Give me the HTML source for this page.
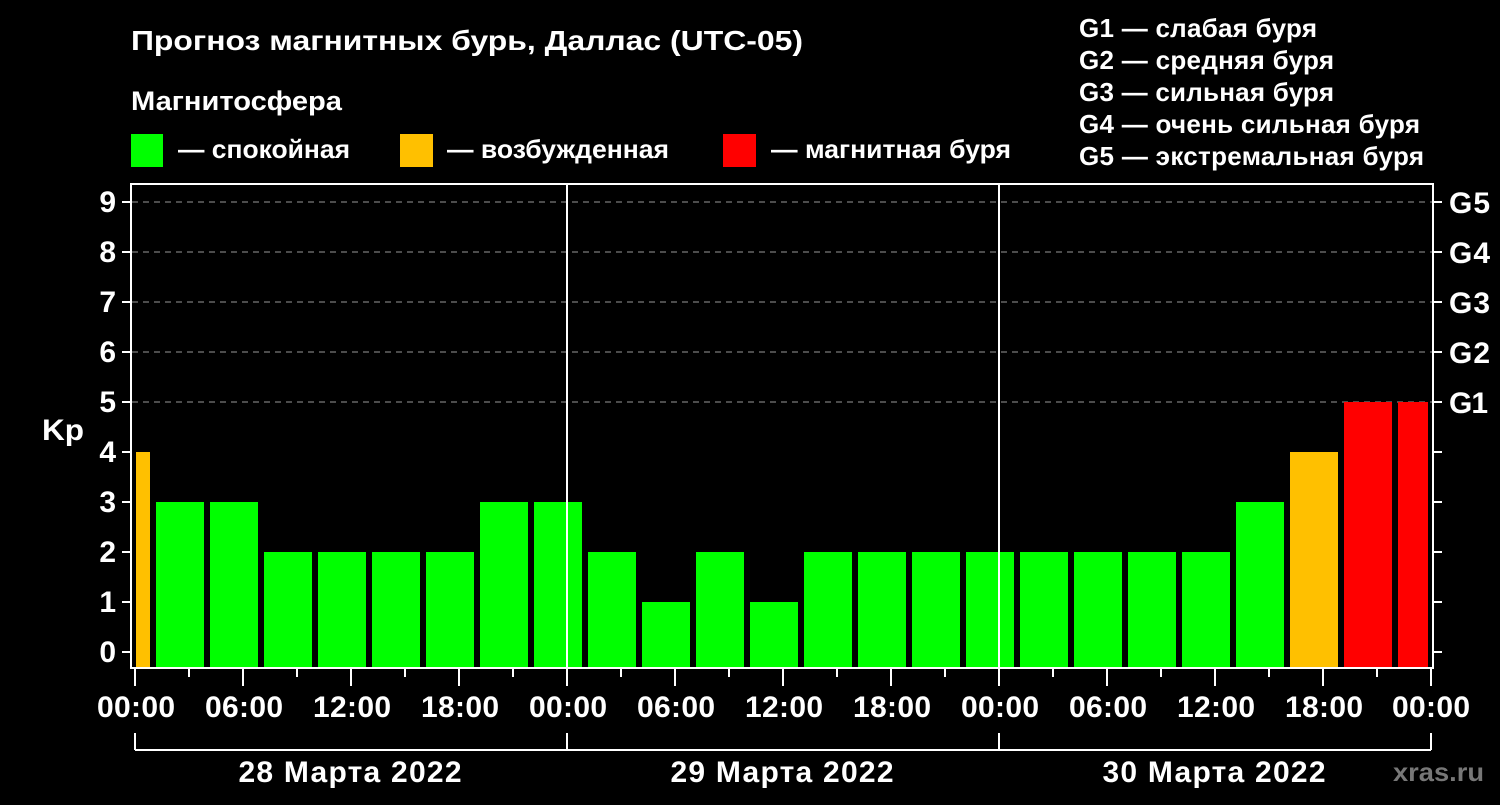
<!DOCTYPE html><html><head><meta charset="utf-8"><style>
body{margin:0;background:#000;width:1500px;height:800px;overflow:hidden}
svg text{font-family:"Liberation Sans",sans-serif;font-weight:bold;fill:#fff}
</style></head><body>
<svg width="1500" height="800" xmlns="http://www.w3.org/2000/svg">
<text x="131" y="50" font-size="28" textLength="672" lengthAdjust="spacingAndGlyphs">Прогноз магнитных бурь, Даллас (UTC-05)</text>
<text x="131" y="110" font-size="27" textLength="211" lengthAdjust="spacingAndGlyphs">Магнитосфера</text>
<rect x="131" y="134" width="32" height="33" fill="#00ff00"/><text x="178" y="158" font-size="26" textLength="172" lengthAdjust="spacingAndGlyphs">— спокойная</text>
<rect x="400" y="134" width="33" height="33" fill="#ffc000"/><text x="447" y="158" font-size="26" textLength="222" lengthAdjust="spacingAndGlyphs">— возбужденная</text>
<rect x="723" y="134" width="33" height="33" fill="#ff0000"/><text x="771" y="158" font-size="26" textLength="240" lengthAdjust="spacingAndGlyphs">— магнитная буря</text>
<g font-size="26" lengthAdjust="spacingAndGlyphs"><text x="1079" y="37" textLength="238">G1 — слабая буря</text><text x="1079" y="69" textLength="255">G2 — средняя буря</text><text x="1079" y="101" textLength="255">G3 — сильная буря</text><text x="1079" y="133" textLength="341">G4 — очень сильная буря</text><text x="1079" y="165" textLength="345">G5 — экстремальная буря</text></g>
<g stroke="#999" stroke-width="1" stroke-dasharray="6,5">
<line x1="132" y1="202" x2="1432" y2="202"/><line x1="132" y1="252" x2="1432" y2="252"/><line x1="132" y1="302" x2="1432" y2="302"/><line x1="132" y1="352" x2="1432" y2="352"/><line x1="132" y1="402" x2="1432" y2="402"/></g>
<g>
<rect x="136" y="452" width="14" height="215" fill="#ffc000"/>
<rect x="156" y="502" width="48" height="165" fill="#0f0"/>
<rect x="210" y="502" width="48" height="165" fill="#0f0"/>
<rect x="264" y="552" width="48" height="115" fill="#0f0"/>
<rect x="318" y="552" width="48" height="115" fill="#0f0"/>
<rect x="372" y="552" width="48" height="115" fill="#0f0"/>
<rect x="426" y="552" width="48" height="115" fill="#0f0"/>
<rect x="480" y="502" width="48" height="165" fill="#0f0"/>
<rect x="534" y="502" width="48" height="165" fill="#0f0"/>
<rect x="588" y="552" width="48" height="115" fill="#0f0"/>
<rect x="642" y="602" width="48" height="65" fill="#0f0"/>
<rect x="696" y="552" width="48" height="115" fill="#0f0"/>
<rect x="750" y="602" width="48" height="65" fill="#0f0"/>
<rect x="804" y="552" width="48" height="115" fill="#0f0"/>
<rect x="858" y="552" width="48" height="115" fill="#0f0"/>
<rect x="912" y="552" width="48" height="115" fill="#0f0"/>
<rect x="966" y="552" width="48" height="115" fill="#0f0"/>
<rect x="1020" y="552" width="48" height="115" fill="#0f0"/>
<rect x="1074" y="552" width="48" height="115" fill="#0f0"/>
<rect x="1128" y="552" width="48" height="115" fill="#0f0"/>
<rect x="1182" y="552" width="48" height="115" fill="#0f0"/>
<rect x="1236" y="502" width="48" height="165" fill="#0f0"/>
<rect x="1290" y="452" width="48" height="215" fill="#ffc000"/>
<rect x="1344" y="402" width="48" height="265" fill="#f00"/>
<rect x="1398" y="402" width="30" height="265" fill="#f00"/>
</g>
<g stroke="#fff" stroke-width="2" fill="none">
<rect x="131" y="184" width="1302" height="484"/>
<line x1="567" y1="184" x2="567" y2="668"/><line x1="999" y1="184" x2="999" y2="668"/>
<path d="M122 202h9M122 252h9M122 302h9M122 352h9M122 402h9M122 452h9M122 502h9M122 552h9M122 602h9M122 652h9"/>
<path d="M1433 202h9M1433 252h9M1433 302h9M1433 352h9M1433 402h9M1433 452h9M1433 502h9M1433 552h9M1433 602h9M1433 652h9"/>
<path d="M135 668v18M243 668v18M351 668v18M459 668v18M567 668v18M675 668v18M783 668v18M891 668v18M999 668v18M1107 668v18M1215 668v18M1323 668v18M1431 668v18"/>
<path d="M189 668v9M297 668v9M405 668v9M513 668v9M621 668v9M729 668v9M837 668v9M945 668v9M1053 668v9M1161 668v9M1269 668v9M1377 668v9"/>
<path d="M135 733v17M567 733v17M999 733v17M1431 733v17M135 750H1431"/>
</g>
<g font-size="30" text-anchor="end"><text x="116" y="212">9</text><text x="116" y="262">8</text><text x="116" y="312">7</text><text x="116" y="362">6</text><text x="116" y="412">5</text><text x="116" y="462">4</text><text x="116" y="512">3</text><text x="116" y="562">2</text><text x="116" y="612">1</text><text x="116" y="662">0</text></g>
<text x="42" y="440" font-size="30" textLength="42" lengthAdjust="spacingAndGlyphs">Kp</text>
<g font-size="30" lengthAdjust="spacingAndGlyphs"><text x="1449" y="213" textLength="41">G5</text><text x="1449" y="263" textLength="41">G4</text><text x="1449" y="313" textLength="41">G3</text><text x="1449" y="363" textLength="41">G2</text><text x="1449" y="413" textLength="39">G1</text></g>
<g font-size="30" text-anchor="middle" lengthAdjust="spacingAndGlyphs"><text x="136" y="717" textLength="78">00:00</text><text x="244" y="717" textLength="78">06:00</text><text x="352" y="717" textLength="78">12:00</text><text x="460" y="717" textLength="78">18:00</text><text x="568" y="717" textLength="78">00:00</text><text x="676" y="717" textLength="78">06:00</text><text x="784" y="717" textLength="78">12:00</text><text x="892" y="717" textLength="78">18:00</text><text x="1000" y="717" textLength="78">00:00</text><text x="1108" y="717" textLength="78">06:00</text><text x="1216" y="717" textLength="78">12:00</text><text x="1324" y="717" textLength="78">18:00</text><text x="1431" y="717" textLength="78">00:00</text>
<text x="350" y="782" textLength="223">28 Марта 2022</text><text x="782" y="782" textLength="223">29 Марта 2022</text><text x="1214" y="782" textLength="223">30 Марта 2022</text></g>
<text x="1393" y="781" font-size="26" style="fill:#777" textLength="91" lengthAdjust="spacingAndGlyphs">xras.ru</text>
</svg></body></html>
